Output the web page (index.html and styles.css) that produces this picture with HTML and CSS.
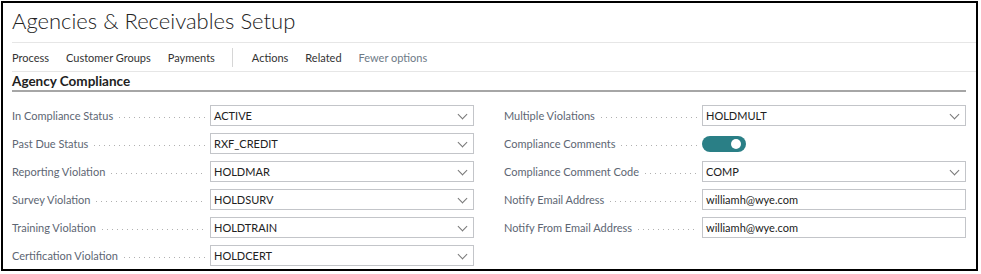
FILE: index.html
```html
<!DOCTYPE html>
<html>
<head>
<title>Agencies &amp; Receivables Setup</title>
<link rel="stylesheet" href="styles.css">
</head>
<body>

  <div class="frame">
    <div class="page-title">Agencies &amp; Receivables Setup</div>

    <div class="action-bar">
      <span class="action">Process</span>
      <span class="action">Customer Groups</span>
      <span class="action">Payments</span>
      <span class="action-sep"></span>
      <span class="action">Actions</span>
      <span class="action">Related</span>
      <span class="action muted">Fewer options</span>
    </div>

    <div class="group-title">Agency Compliance</div>

    <div class="fields">
      <div class="column">
        <div class="field">
          <span class="label">In Compliance Status</span><span class="leader"></span>
          <div class="input select">ACTIVE<span class="chevron"></span></div>
        </div>
        <div class="field">
          <span class="label">Past Due Status</span><span class="leader"></span>
          <div class="input select">RXF_CREDIT<span class="chevron"></span></div>
        </div>
        <div class="field">
          <span class="label">Reporting Violation</span><span class="leader"></span>
          <div class="input select">HOLDMAR<span class="chevron"></span></div>
        </div>
        <div class="field">
          <span class="label">Survey Violation</span><span class="leader"></span>
          <div class="input select">HOLDSURV<span class="chevron"></span></div>
        </div>
        <div class="field">
          <span class="label">Training Violation</span><span class="leader"></span>
          <div class="input select">HOLDTRAIN<span class="chevron"></span></div>
        </div>
        <div class="field">
          <span class="label">Certification Violation</span><span class="leader"></span>
          <div class="input select">HOLDCERT<span class="chevron"></span></div>
        </div>
      </div>

      <div class="column">
        <div class="field">
          <span class="label">Multiple Violations</span><span class="leader"></span>
          <div class="input select">HOLDMULT<span class="chevron"></span></div>
        </div>
        <div class="field">
          <span class="label">Compliance Comments</span><span class="leader"></span>
          <div class="toggle-wrap"><span class="toggle on"><span class="knob"></span></span></div>
        </div>
        <div class="field">
          <span class="label">Compliance Comment Code</span><span class="leader"></span>
          <div class="input select">COMP<span class="chevron"></span></div>
        </div>
        <div class="field">
          <span class="label">Notify Email Address</span><span class="leader"></span>
          <div class="input">williamh@wye.com</div>
        </div>
        <div class="field">
          <span class="label">Notify From Email Address</span><span class="leader"></span>
          <div class="input">williamh@wye.com</div>
        </div>
      </div>
    </div>
  </div>

</body>
</html>
```

FILE: styles.css
```css
:root {
  --text-dark: #212121;
  --text-label: #5d6673;
  --text-muted: #6e7a87;
  --line-light: #e6e6e6;
  --line-group: #a6a6a6;
  --input-border: #c3c5c9;
  --toggle-teal: #2a7f86;
}

body {
  margin: 0;
  background: #ffffff;
  font-family: Lato, 'Open Sans', sans-serif;
  color: var(--text-dark);
}

.frame {
  margin: 1px 0 0 1px;
  width: 977px;
  height: 270px;
  box-sizing: border-box;
  border: 2px solid #000;
  padding-left: 9px;
  overflow: hidden;
}

.page-title {
  font-size: 22px;
  font-weight: 300;
  line-height: 30px;
  padding-top: 3px;
  height: 36px;
  color: #222;
  border-bottom: 1px solid var(--line-light);
}

.action-bar {
  display: flex;
  align-items: center;
  height: 28px;
  border-bottom: 1px solid var(--line-light);
  font-size: 11px;
  color: #333;
}

.action {
  margin-right: 17px;
}

.action.muted {
  color: var(--text-muted);
}

.action-sep {
  width: 1px;
  height: 19px;
  background: #d6d6d6;
  margin: 0 19px 0 0;
}

.group-title {
  font-size: 13.5px;
  font-weight: 700;
  line-height: 17px;
  padding-top: 1px;
  height: 17px;
  margin-right: 10px;
  border-bottom: 2px solid var(--line-group);
}

.fields {
  display: flex;
  gap: 30px;
  padding-top: 13px;
}

.column {
  width: 462px;
  display: flex;
  flex-direction: column;
  gap: 7px;
}

.field {
  display: flex;
  align-items: center;
  height: 21px;
}

.label {
  font-size: 11px;
  color: var(--text-label);
  white-space: nowrap;
}

.leader {
  flex: 1;
  height: 1px;
  margin: 3px 5px 0 6px;
  background: repeating-linear-gradient(to right, #b0b0b0 0 1px, transparent 1px 5px);
}

.input {
  position: relative;
  width: 264px;
  height: 21px;
  box-sizing: border-box;
  border: 1px solid var(--input-border);
  padding: 0 3px;
  font-size: 11px;
  line-height: 19px;
  color: var(--text-dark);
}

.chevron {
  position: absolute;
  right: 7px;
  top: 5px;
  width: 6px;
  height: 6px;
  border-right: 1px solid #777;
  border-bottom: 1px solid #777;
  transform: rotate(45deg);
}

.toggle-wrap {
  width: 264px;
  display: flex;
  align-items: center;
}

.toggle {
  width: 44px;
  height: 16px;
  border-radius: 8px;
  background: var(--toggle-teal);
  display: flex;
  align-items: center;
  justify-content: flex-end;
  padding: 0 5px;
  box-sizing: border-box;
}

.knob {
  width: 10px;
  height: 10px;
  border-radius: 50%;
  background: #fff;
}
```
